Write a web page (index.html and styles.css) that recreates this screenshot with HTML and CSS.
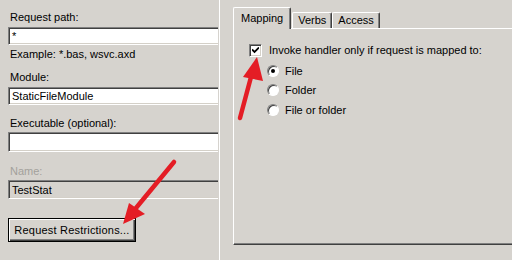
FILE: index.html
```html
<!DOCTYPE html>
<html lang="en">
<head>
    <meta charset="UTF-8">
    <title>Handler Mapping</title>
    <link rel="stylesheet" href="styles.css">
</head>
<body>
    <div id="page">
        <div class="left">
            <label class="lbl lbl-first">Request path:</label>
            <div class="field">*</div>
            <p class="hint">Example: *.bas, wsvc.axd</p>
            <label class="lbl lbl-module">Module:</label>
            <div class="field">StaticFileModule</div>
            <label class="lbl lbl-exec">Executable (optional):</label>
            <div class="field field-tall"></div>
            <label class="lbl lbl-name disabled">Name:</label>
            <div class="field field-name readonly">TestStat</div>
            <button class="btn">Request Restrictions...</button>
        </div>

        <div class="splitter"></div>

        <div class="right">
            <div class="tabs">
                <div class="tab active">Mapping</div>
                <div class="tab">Verbs</div>
                <div class="tab">Access</div>
            </div>
            <div class="panel">
                <div class="check-row">
                    <span class="checkbox">
                        <svg width="7" height="7" viewBox="0 0 7 7"><path d="M0 2.5 L2.5 5 L7 0.5" stroke="#000" stroke-width="1.8" fill="none"/></svg>
                    </span>
                    <span>Invoke handler only if request is mapped to:</span>
                </div>
                <div class="radios">
                    <div class="radio-row"><span class="radio on"></span><span>File</span></div>
                    <div class="radio-row"><span class="radio"></span><span>Folder</span></div>
                    <div class="radio-row"><span class="radio"></span><span>File or folder</span></div>
                </div>
            </div>
        </div>

        <!-- annotation arrows -->
        <svg class="arrows" width="512" height="260" viewBox="0 0 512 260">
            <line x1="174" y1="162" x2="136" y2="208" stroke="#e41d25" stroke-width="4.5" stroke-linecap="round"/>
            <polygon points="123,224 129,203 145,214" fill="#e41d25"/>
            <line x1="240" y1="118" x2="251" y2="77" stroke="#e41d25" stroke-width="4.5" stroke-linecap="round"/>
            <polygon points="257,57 243,77 263,81" fill="#e41d25"/>
        </svg>
    </div>
</body>
</html>
```

FILE: styles.css
```css
body{
    margin: 0;
    background: #d6d3ce;
    font-family: "Liberation Sans", Arial, sans-serif;
    font-size: 11px;
    line-height: 14px;
    color: #000;
    overflow: hidden;
}
#page{
    display: flex;
    width: 512px;
    height: 260px;
    overflow: hidden;
}
.left{
    display: flex;
    flex-direction: column;
    width: 210px;
    padding-left: 8px;
    overflow: hidden;
    flex-shrink: 0;
}
.lbl{
    display: block;
    padding-left: 2px;
    white-space: nowrap;
}
.lbl-first{
    margin-top: 10px;
}
.lbl-module{
    margin-top: 9px;
}
.lbl-exec{
    margin-top: 11px;
}
.lbl-name{
    margin-top: 12px;
}
.disabled{
    color: #a3a19c;
}
.hint{
    margin: 2px 0 0 0;
    padding-left: 2px;
    white-space: nowrap;
}
.field{
    box-sizing: border-box;
    width: 240px;
    height: 18px;
    margin-top: 3px;
    padding: 1px 0 0 3px;
    background: #fff;
    border: 1px solid;
    border-color: #808080 #fff #fff #808080;
    box-shadow: inset 1px 1px #404040, inset -1px -1px #d4d0c8;
    white-space: nowrap;
    flex-shrink: 0;
}
.field-tall{
    height: 20px;
    margin-top: 2px;
}
.field-name{
    height: 19px;
    margin-top: 2px;
    padding-top: 2px;
}
.readonly{
    background: #d6d3ce;
}
.btn{
    box-sizing: border-box;
    width: 128px;
    height: 24px;
    margin-top: 19px;
    padding: 0;
    font: inherit;
    color: #000;
    background: #d6d3ce;
    border: 1px solid #000;
    box-shadow: inset 1px 1px #fff, inset -1px -1px #404040, inset -2px -2px #808080;
    text-align: center;
    letter-spacing: 0.2px;
}
.splitter{
    width: 1px;
    margin-left: 1px;
    background: #fff;
    flex-shrink: 0;
}
.right{
    display: flex;
    flex-direction: column;
    padding-left: 13px;
    padding-top: 7px;
    flex-shrink: 0;
}
.tabs{
    display: flex;
    align-items: flex-end;
    height: 22px;
    position: relative;
    z-index: 1;
    margin-bottom: -1px;
}
.tab{
    box-sizing: border-box;
    height: 16px;
    padding: 0 5px;
    border-top: 1px solid #fff;
    border-left: 1px solid #fff;
    border-right: 1px solid #404040;
    box-shadow: inset -1px 0 #808080;
    border-radius: 2px 2px 0 0;
    margin-bottom: 1px;
}
.tab.active{
    height: 22px;
    padding: 3px 7px 0 7px;
    background: #d6d3ce;
    margin-bottom: 0;
    margin-right: 1px;
}
.panel{
    width: 300px;
    height: 217px;
    border-top: 1px solid #fff;
    border-left: 1px solid #fff;
    border-bottom: 1px solid #404040;
    box-shadow: inset 0 -1px #808080;
    padding: 14px 0 0 15px;
    box-sizing: border-box;
}
.check-row{
    display: flex;
    align-items: center;
    gap: 7px;
    white-space: nowrap;
}
.checkbox{
    box-sizing: border-box;
    width: 13px;
    height: 13px;
    background: #fff;
    border: 1px solid;
    border-color: #808080 #fff #fff #808080;
    box-shadow: inset 1px 1px #404040, inset -1px -1px #d4d0c8;
    display: flex;
    align-items: center;
    justify-content: center;
}
.radios{
    display: flex;
    flex-direction: column;
    padding-left: 18px;
    margin-top: 4px;
}
.radio-row{
    display: flex;
    align-items: center;
    gap: 6px;
    height: 19.5px;
}
.radio{
    box-sizing: border-box;
    width: 12px;
    height: 12px;
    border-radius: 50%;
    background: #fff;
    border: 1px solid;
    border-color: #808080 #fff #fff #808080;
    box-shadow: inset 1px 1px #404040;
    display: flex;
    align-items: center;
    justify-content: center;
}
.radio.on::after{
    content: "";
    width: 4px;
    height: 4px;
    border-radius: 50%;
    background: #000;
}
.arrows{
    position: absolute;
    left: 0;
    top: 0;
    pointer-events: none;
}
```
